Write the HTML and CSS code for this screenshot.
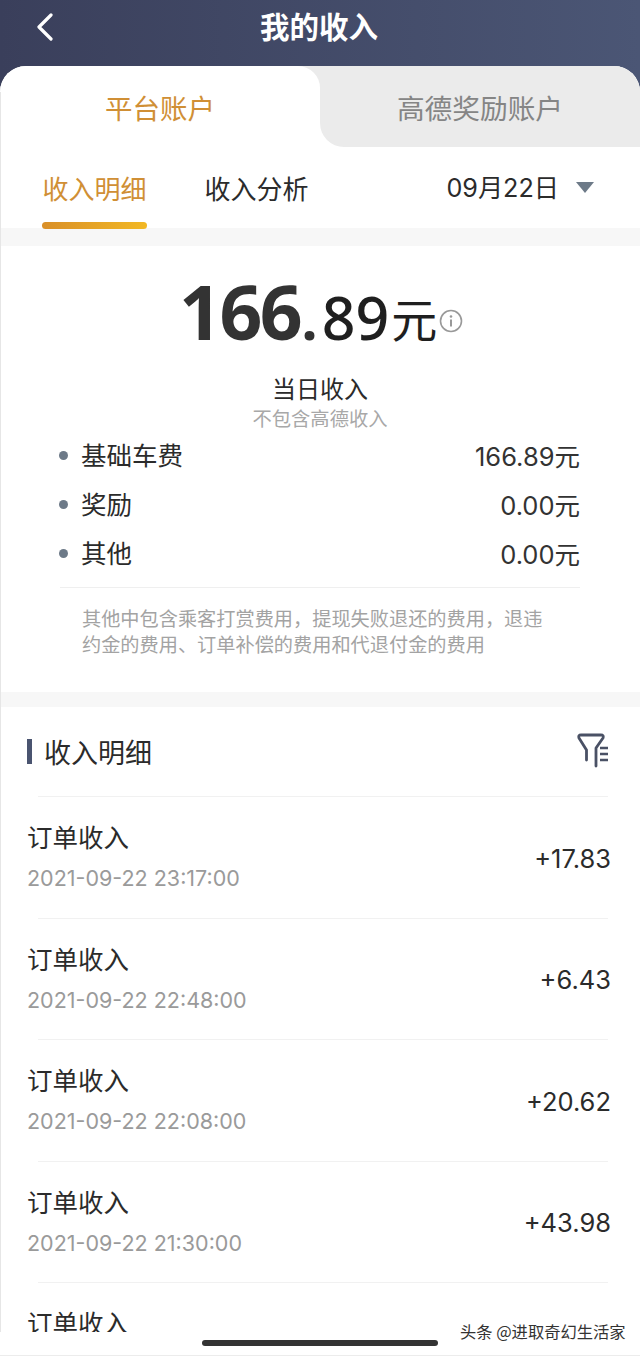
FILE: index.html
```html
<!DOCTYPE html>
<html lang="zh-CN">
<head>
  <meta charset="UTF-8">
  <meta name="viewport" content="width=device-width, initial-scale=1.0">
  <title>我的收入</title>
  <link rel="stylesheet" href="styles.css">
</head>
<body>
  <div class="screen">
    <header class="top-bar">
      <svg class="back-icon" width="18" height="28" viewBox="0 0 18 28">
        <path d="M15 2 L3 14 L15 26" fill="none" stroke="#fff" stroke-width="3.200" stroke-linecap="round" stroke-linejoin="round"/>
      </svg>
      <h1>我的收入</h1>
    </header>

    <div class="card">
      <div class="account-tabs">
        <div class="account-tab active">平台账户</div>
        <div class="account-tab">高德奖励账户</div>
      </div>

      <div class="sub-tabs">
        <div class="sub-tab active">收入明细</div>
        <div class="sub-tab">收入分析</div>
        <div class="date-pick">09月22日<span class="arrow"></span></div>
      </div>

      <div class="strip strip-first"></div>

      <section class="summary">
        <div class="total">
          <span class="big">166</span><span class="dot">.</span><span class="small">89<span class="unit">元</span></span>
          <svg class="info-icon" width="24" height="24" viewBox="0 0 24 24">
            <circle cx="12" cy="12" r="10.500" fill="none" stroke="#999" stroke-width="1.600"/>
            <circle cx="12" cy="7.500" r="1.300" fill="#999"/>
            <path d="M12 10.500 V17.500" stroke="#999" stroke-width="2"/>
          </svg>
        </div>
        <div class="total-label">当日收入</div>
        <div class="total-note">不包含高德收入</div>

        <ul class="breakdown">
          <li><span>基础车费</span><span class="value">166.89元</span></li>
          <li><span>奖励</span><span class="value">0.00元</span></li>
          <li><span>其他</span><span class="value">0.00元</span></li>
        </ul>

        <p class="remark">其他中包含乘客打赏费用，提现失败退还的费用，退违约金的费用、订单补偿的费用和代退付金的费用</p>
      </section>

      <div class="strip"></div>

      <section class="detail">
        <div class="detail-head">
          <h2>收入明细</h2>
          <svg class="filter-icon" width="32" height="36" viewBox="0 0 32 36">
            <path d="M9.500 27 V17 L2 5 Q1 2 4 2 H24 Q27 2 26 5 L19 15 V33" fill="none" stroke="#4a5165" stroke-width="2.800" stroke-linecap="round" stroke-linejoin="round"/>
            <path d="M23 15 H31 M23 21 H31 M23 27 H31" stroke="#4a5165" stroke-width="2.600"/>
          </svg>
        </div>

        <div id="rows"></div>
      </section>
    </div>

    <div class="left-edge"></div>

    <div class="bottom-cover">
      <div class="home-bar"></div>
      <div class="watermark">头条 @进取奇幻生活家</div>
    </div>
  </div>

  <script>
    const orders = [
      { time: '2021-09-22 23:17:00', amount: '+17.83' },
      { time: '2021-09-22 22:48:00', amount: '+6.43' },
      { time: '2021-09-22 22:08:00', amount: '+20.62' },
      { time: '2021-09-22 21:30:00', amount: '+43.98' },
      { time: '', amount: '' }
    ];

    const rows = document.getElementById('rows');
    orders.forEach(order => {
      const row = document.createElement('div');
      row.classList.add('row');
      row.innerHTML = `
        <div>
          <div class="row-title">订单收入</div>
          <div class="row-time">${order.time}</div>
        </div>
        <div class="row-amount">${order.amount}</div>
      `;
      rows.appendChild(row);
    });
  </script>
</body>
</html>
```

FILE: styles.css
```css
* {
  box-sizing: border-box;
}

html, body {
  margin: 0;
  padding: 0;
  height: 1356px;
  overflow: hidden;
}

body {
  font-family: "Noto Sans CJK SC", "Noto Sans", sans-serif;
  background-color: #fff;
  color: #222;
}

.screen {
  position: relative;
  height: 1356px;
  overflow: hidden;
  background: linear-gradient(90deg, #3a3f5b, #4b5675);
}

.top-bar {
  height: 66px;
  padding-left: 36px;
  display: flex;
  align-items: center;
  position: relative;
}

.top-bar h1 {
  position: absolute;
  left: 0;
  right: 2px;
  top: 4px;
  margin: 0;
  text-align: center;
  font-size: 29.500px;
  line-height: 42px;
  font-weight: 700;
  color: #fff;
}

.back-icon {
  margin-top: -12px;
}

.card {
  height: 1290px;
  background-color: #fff;
  border-radius: 26px 26px 0 0;
  overflow: hidden;
}

.account-tabs {
  display: flex;
  height: 81px;
  /* gray shows behind the white tab's top corner, white behind the gray tab's bottom corner */
  background: linear-gradient(#ebebeb 50%, #fff 50%);
}

.account-tab {
  width: 320px;
  text-align: center;
  font-size: 27.500px;
  line-height: 82px;
  color: #858585;
  position: relative;
}

.account-tab:last-child {
  background-color: #ebebeb;
  border-radius: 0 0 0 24px;
  font-size: 27.700px;
}

.account-tab.active {
  color: #d08f35;
  background-color: #fff;
  border-radius: 26px 22px 0 0;
}

.sub-tabs {
  height: 81px;
  padding: 0 46px 0 42px;
  display: flex;
  align-items: flex-start;
  background-color: #fff;
  position: relative;
}

.sub-tab {
  width: 105px;
  height: 82px;
  margin-right: 57px;
  padding-top: 22px;
  text-align: center;
  font-size: 26px;
  line-height: 38px;
  white-space: nowrap;
  color: #2b2b2b;
  position: relative;
}

.sub-tab.active {
  color: #d08f35;
}

.sub-tab.active::after {
  content: "";
  position: absolute;
  left: 0;
  right: 0;
  bottom: 0;
  height: 7px;
  border-radius: 4px;
  background: linear-gradient(90deg, #d98f28, #f2b824);
}

.date-pick {
  margin-left: auto;
  padding-top: 22px;
  font-family: Inter, "Noto Sans CJK SC", sans-serif;
  font-size: 25.200px;
  line-height: 38px;
  color: #2b2b2b;
  display: flex;
}

.arrow {
  width: 0;
  height: 0;
  margin: 13px 0 0 17px;
  border-left: 9.500px solid transparent;
  border-right: 9.500px solid transparent;
  border-top: 11px solid #6d7a88;
}

.strip {
  height: 15px;
  background-color: #f7f7f7;
}

.strip-first {
  height: 18px;
}

.summary {
  height: 446px;
  padding: 0 60px;
}

.total {
  display: flex;
  align-items: baseline;
  height: 125px;
  padding-left: 119px;
  line-height: 130px;
  color: #1f1f1f;
}

.big {
  font-family: "Open Sans", sans-serif;
  font-size: 75px;
  font-weight: 700;
  letter-spacing: -2.500px;
  color: #333;
}

.dot {
  margin-left: 1px;
  font-family: "Open Sans", sans-serif;
  font-size: 58px;
  font-weight: 700;
  color: #333;
}

.small {
  margin-left: 4px;
  font-family: "Noto Sans", sans-serif;
  font-size: 59px;
  font-weight: 500;
  color: #1f1f1f;
}

.unit {
  margin-left: 2px;
  font-family: "Noto Sans CJK SC", sans-serif;
  font-size: 46px;
  font-weight: 400;
  vertical-align: 3px;
}

.info-icon {
  align-self: center;
  margin: 24px 0 0 2px;
}

.total-label {
  text-align: center;
  font-size: 24px;
  line-height: 34px;
  color: #2b2b2b;
}

.total-note {
  text-align: center;
  font-size: 19.300px;
  line-height: 26px;
  color: #a8a8a8;
}

.breakdown {
  list-style: none;
  margin: 0;
  padding: 0 0 9px;
  border-bottom: 1px solid #efefef;
}

.breakdown li {
  display: flex;
  justify-content: space-between;
  height: 49px;
  padding-left: 21px;
  font-size: 25.500px;
  line-height: 45px;
  color: #2b2b2b;
  position: relative;
}

.breakdown li::before {
  content: "";
  position: absolute;
  left: -1px;
  top: 20px;
  width: 9px;
  height: 9px;
  border-radius: 50%;
  background-color: #6d7a88;
}

.value {
  font-family: Inter, "Noto Sans CJK SC", sans-serif;
  font-size: 25.500px;
  line-height: 51px;
  color: #333;
}

.remark {
  margin: 17px 0 0 22px;
  font-size: 19.200px;
  line-height: 26px;
  color: #a3a3a3;
  width: 470px;
}

.detail {
  padding: 0 32px 0 27px;
}

.detail-head {
  height: 89px;
  display: flex;
  align-items: center;
  justify-content: space-between;
}

.detail-head h2 {
  margin: 0;
  padding-left: 12px;
  border-left: 5px solid #4a5470;
  font-size: 27px;
  font-weight: 400;
  line-height: 25px;
  color: #2b2b2b;
}

.filter-icon {
  margin: -2px -1px 0 0;
}

.row {
  height: 121.500px;
  border-top: 1px solid #f1f1f1;
  margin-left: 11px;
  display: flex;
  align-items: center;
  justify-content: space-between;
}

.row > div:first-child {
  margin-left: -11px;
}

.row-title {
  margin-top: -3px;
  font-size: 25.500px;
  line-height: 36px;
  color: #2b2b2b;
}

.row-time {
  margin-top: 9px;
  height: 30px;
  font-family: Inter, sans-serif;
  font-size: 21.500px;
  line-height: 30px;
  color: #9a9a9a;
}

.row-amount {
  margin: 2px -3px 0 0;
  font-family: Inter, sans-serif;
  font-size: 25.500px;
  color: #2b2b2b;
}

.left-edge {
  position: absolute;
  left: 0;
  top: 92px;
  bottom: 0;
  width: 1px;
  background-color: #e6e6e6;
}

.bottom-cover {
  position: absolute;
  left: 0;
  right: 0;
  bottom: 0;
  height: 24px;
  background-color: #fff;
  border-bottom: 1px solid #ececec;
}

.home-bar {
  position: absolute;
  left: 202px;
  top: 8px;
  width: 236px;
  height: 6px;
  border-radius: 3px;
  background-color: #333;
}

.watermark {
  position: absolute;
  left: 460px;
  top: -13px;
  font-size: 16.300px;
  line-height: 24px;
  white-space: nowrap;
  color: #333;
}
```
